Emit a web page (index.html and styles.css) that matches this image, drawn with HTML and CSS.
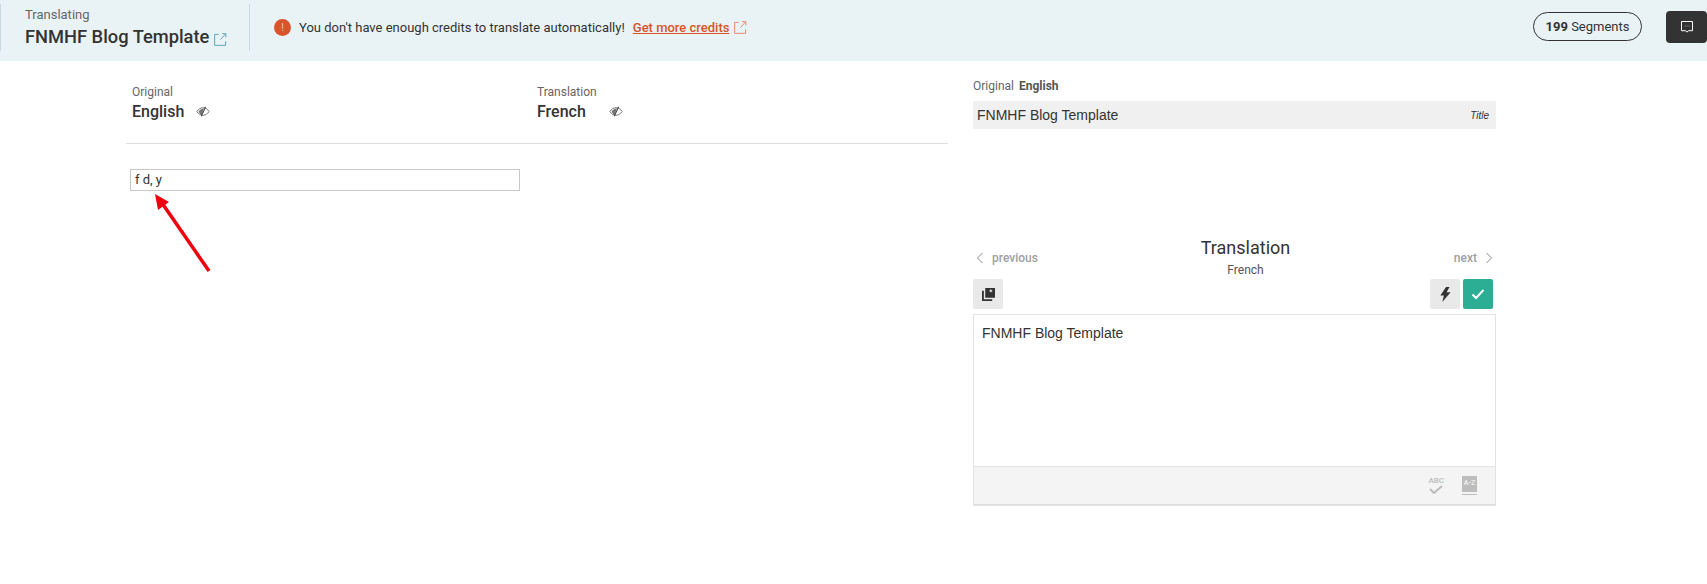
FILE: index.html
```html
<!DOCTYPE html>
<html lang="en">
<head>
<meta charset="utf-8">
<title>Translating FNMHF Blog Template</title>
<link rel="stylesheet" href="styles.css">
</head>
<body>
<header class="topbar">
  <div class="project">
    <div class="project-label">Translating</div>
    <div class="project-name">FNMHF Blog Template
      <svg class="ext ext-blue" viewBox="0 0 14 14"><path d="M5 1.500H.7v11.800h11.800V9M7 7l5.500-6M8.800 .7h4v4"/></svg>
    </div>
  </div>
  <div class="notice">
    <span class="alert">!</span>
    <span class="notice-text">You don't have enough credits to translate automatically!</span>
    <a class="notice-link">Get more credits</a>
    <svg class="ext ext-red" viewBox="0 0 14 14"><path d="M5 1.500H.7v11.800h11.800V9M7 7l5.500-6M8.800 .7h4v4"/></svg>
  </div>
  <div class="pill"><b>199</b> Segments</div>
  <button class="chat">
    <svg viewBox="0 0 14 14" width="14" height="14"><path class="chat-line" d="M1.500 1.500h11v9.200H8.400L7 12.200l-1.400-1.500H1.500z"/><path class="chat-dots" d="M4.600 6h1M6.600 6h1M8.600 6h1"/></svg>
  </button>
</header>

<main class="workspace">
  <section class="doc">
    <div class="doc-head">
      <div class="lang-col">
        <div class="lang-label">Original</div>
        <div class="lang-name">English
          <svg class="eye" viewBox="0 0 16 12"><path d="M1 6c2-3 4.300-4.300 7-4.300S13 3 15 6c-2 3-4.300 4.300-7 4.300S3 9 1 6z"/><path class="eye-fill" d="M3 6c1.300-2 3-3 6-3.400L6.500 10C5 9.300 4 8 3 6z"/><path class="eye-slash" d="M11 .6 6 11.400"/></svg>
        </div>
      </div>
      <div class="lang-col">
        <div class="lang-label">Translation</div>
        <div class="lang-name">French
          <svg class="eye eye-fr" viewBox="0 0 16 12"><path d="M1 6c2-3 4.300-4.300 7-4.300S13 3 15 6c-2 3-4.300 4.300-7 4.300S3 9 1 6z"/><path class="eye-fill" d="M3 6c1.300-2 3-3 6-3.400L6.500 10C5 9.300 4 8 3 6z"/><path class="eye-slash" d="M11 .6 6 11.400"/></svg>
        </div>
      </div>
    </div>
    <div class="doc-body">
      <div class="segment">f d, y</div>
      <svg class="arrow" viewBox="0 0 70 90" width="70" height="90"><path d="M60 81 13 13" /><polygon points="6,4 20,12 9,20"/></svg>
    </div>
  </section>

  <aside class="editor">
    <div class="src-label">Original <b>English</b></div>
    <div class="src-row"><span>FNMHF Blog Template</span><i>Title</i></div>

    <div class="nav-row">
      <div class="nav nav-prev"><svg viewBox="0 0 8 12" width="8" height="12"><path d="M6.500 1 1.500 6l5 5"/></svg>previous</div>
      <div class="nav-title">
        <div class="nav-heading">Translation</div>
        <div class="nav-lang">French</div>
      </div>
      <div class="nav nav-next">next<svg viewBox="0 0 8 12" width="8" height="12"><path d="M1.500 1l5 5-5 5"/></svg></div>
    </div>

    <div class="tools">
      <button class="tool"><svg viewBox="0 0 14 14" width="13" height="13"><path d="M3.500 0h10.500v10.500H3.500z"/><path d="M0 3h2v9h9v2H0z"/><path class="tool-cut" d="M9.500 1.600v3M8 3.100h3"/></svg></button>
      <span class="tools-gap"></span>
      <button class="tool"><svg viewBox="0 0 10 14" width="11" height="15"><path d="M5.500 0 .2 8h3.300L2 14l7.800-9.200H6L8.800 0z"/></svg></button>
      <button class="tool tool-ok"><svg viewBox="0 0 14 12" width="14" height="12"><path d="M1.500 6.500 5 10l7.500-8"/></svg></button>
    </div>

    <div class="box">
      <div class="box-text">FNMHF Blog Template</div>
      <div class="box-foot">
        <div class="spell"><span>ABC</span><svg viewBox="0 0 14 9" width="14" height="9"><path d="M1 4l4 4 8-7"/></svg></div>
        <div class="gloss"><span>A-Z</span></div>
      </div>
    </div>
  </aside>
</main>
</body>
</html>
```
FILE: styles.css
```css
* { box-sizing: border-box; }
html, body { margin: 0; padding: 0; }
body {
  width: 1707px;
  height: 584px;
  overflow: hidden;
  background: #fff;
  font-family: Roboto, "Liberation Sans", sans-serif;
  color: #333;
}
button { border: 0; padding: 0; font: inherit; }

.topbar {
  height: 61px;
  background: #e9f2f5;
  display: flex;
  align-items: flex-start;
  padding-top: 4px;
}
.project {
  width: 250px;
  height: 47px;
  padding: 2px 0 0 25px;
  border-right: 1px solid #c9dade;
  border-left: 1px solid #c9dade;
}
.project-label { font-size: 13px; line-height: 17px; color: #666; margin-left: -1px; }
.project-name { font-size: 18.300px; font-weight: 500; line-height: 27px; color: #333; margin-left: -1px; white-space: nowrap; }
.ext { fill: none; stroke-width: 1; vertical-align: -3px; }
.ext-blue { width: 13px; height: 13px; stroke: #5a9fb0; }
.ext-red { width: 13px; height: 13px; stroke: #e8836a; margin-left: 5px; }

.notice {
  display: flex;
  align-items: center;
  height: 46px;
  padding-left: 24px;
  font-size: 13px;
  flex: 1;
}
.alert {
  width: 17px; height: 17px;
  border-radius: 50%;
  background: #d9542b;
  color: #f7c9b8;
  font-size: 10px;
  line-height: 17px;
  text-align: center;
  margin-right: 8px;
}
.notice-text { color: #333; }
.notice-link { color: #d9542b; font-weight: 500; text-decoration: underline; font-size: 13px; margin-left: 8px; }

.pill {
  width: 109px;
  height: 29px;
  margin-top: 8px;
  border: 1px solid #333;
  border-radius: 15px;
  font-size: 13px;
  line-height: 27px;
  text-align: center;
  color: #333;
}
.pill b { font-weight: 700; }
.chat {
  width: 41px;
  height: 32px;
  margin: 7px 0 0 24px;
  background: #333;
  border-radius: 4px;
  display: flex;
  align-items: center;
  justify-content: center;
}
.chat-line { fill: none; stroke: #fff; stroke-width: 1; }
.chat-dots { fill: none; stroke: #999; stroke-width: 1; }

.workspace {
  display: flex;
  align-items: flex-start;
  padding-left: 126px;
}
.doc { width: 822px; }
.doc-head {
  display: flex;
  height: 83px;
  padding: 23px 0 0 6px;
  border-bottom: 1px solid #ddd;
}
.lang-col { width: 405px; }
.lang-label { font-size: 12px; line-height: 17px; color: #666; }
.lang-name { font-size: 16px; font-weight: 500; line-height: 22px; color: #333; white-space: nowrap; }
.eye { width: 14px; height: 11px; margin-left: 8px; fill: none; stroke: #666; stroke-width: 1; }
.eye-fr { margin-left: 19px; }
.eye-fill { fill: #777; stroke: none; }
.eye .eye-slash { stroke: #444; stroke-width: 1.200; }

.doc-body { position: relative; padding: 25px 0 0 4px; }
.segment {
  width: 390px;
  height: 22px;
  border: 1px solid #c8c8c8;
  font-size: 13px;
  line-height: 20px;
  padding-left: 4px;
  color: #333;
}
.arrow { position: absolute; left: 23px; top: 46px; }
.arrow path { stroke: #f0000f; stroke-width: 3.500; fill: none; }
.arrow polygon { fill: #f0000f; }

.editor { width: 523px; margin-left: 25px; padding-top: 17px; }
.src-label { font-size: 12px; line-height: 16px; color: #666; }
.src-label b { font-weight: 700; color: #555; margin-left: 2px; }
.src-row {
  display: flex;
  justify-content: space-between;
  align-items: center;
  height: 28px;
  margin-top: 7px;
  padding: 0 7px 0 4px;
  background: #f0f0f0;
  font-family: "Liberation Sans", Arial, sans-serif;
  font-size: 14px;
  color: #333;
}
.src-row i { font-size: 10px; }

.nav-row {
  display: flex;
  align-items: flex-start;
  justify-content: space-between;
  margin-top: 107px;
  padding: 0 3px;
}
.nav { display: flex; align-items: center; gap: 8px; font-size: 12px; color: #a0a0a0; font-weight: 500; padding-top: 14px; line-height: 16px; }
.nav-prev { width: 92px; }
.nav-next { width: 70px; justify-content: flex-end; }
.nav svg { fill: none; stroke: #888; stroke-width: 1; }
.nav-title { text-align: center; }
.nav-heading { font-size: 18px; line-height: 24px; color: #333; }
.nav-lang { font-size: 12px; line-height: 20px; color: #555; }

.tools { display: flex; gap: 3px; margin-top: -1px; padding-right: 3px; }
.tools-gap { flex: 1; }
.tool {
  width: 30px;
  height: 30px;
  background: #e9e9e9;
  border-radius: 2px;
  display: flex;
  align-items: center;
  justify-content: center;
}
.tool svg path { fill: #333; }
.tool .tool-cut { fill: none; stroke: #e9e9e9; stroke-width: 1.200; }
.tool-ok { background: #2bae93; }
.tool.tool-ok svg path { fill: none; stroke: #fff; stroke-width: 2; }

.box {
  margin-top: 5px;
  height: 192px;
  border: 1px solid #e3e3e3;
  display: flex;
  flex-direction: column;
}
.box-text {
  flex: 1;
  padding: 9px 8px;
  font-family: "Liberation Sans", Arial, sans-serif;
  font-size: 14px;
  line-height: 18px;
  color: #333;
}
.box-foot {
  height: 39px;
  background: #f4f4f4;
  border-top: 1px solid #e3e3e3;
  border-bottom: 1px solid #ddd;
  display: flex;
  justify-content: flex-end;
  align-items: center;
  gap: 18px;
  padding-right: 18px;
}
.spell { display: flex; flex-direction: column; align-items: center; font-size: 8px; line-height: 8px; color: #bbb; font-weight: 500; }
.spell svg { fill: none; stroke: #bbb; stroke-width: 2; }
.gloss {
  width: 15px;
  height: 18px;
  margin-top: -2px;
  background: #bdbdbd;
  border-bottom: 2px solid #f4f4f4;
  box-shadow: 0 1px 0 #bdbdbd;
  color: #eee;
  font-size: 7px;
  line-height: 14px;
  text-align: center;
  font-weight: 700;
}
```
